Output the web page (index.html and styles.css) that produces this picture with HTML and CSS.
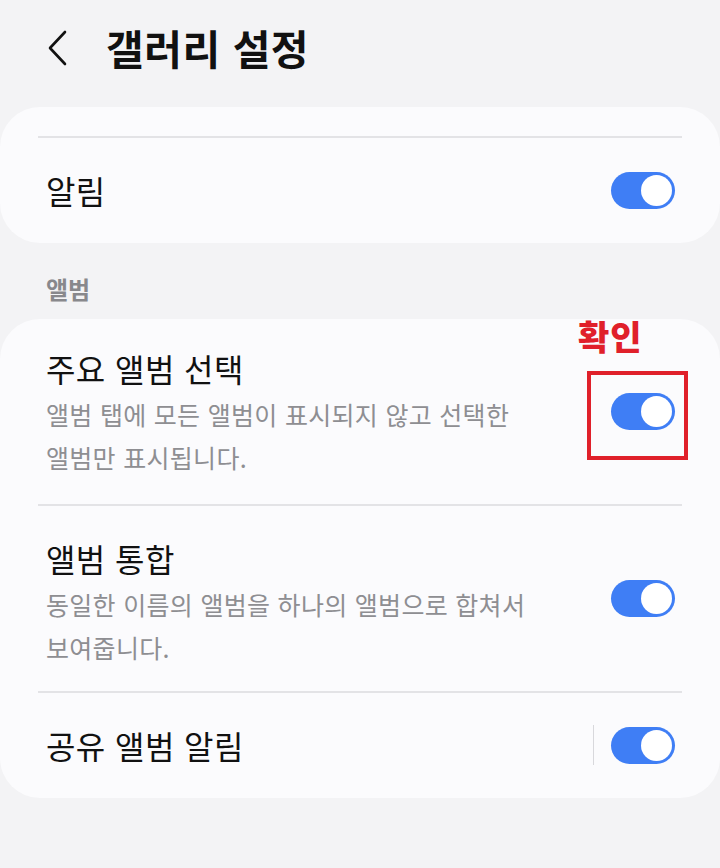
FILE: index.html
```html
<!DOCTYPE html>
<html lang="ko">
<head>
    <meta charset="UTF-8">
    <meta name="viewport" content="width=device-width, initial-scale=1.0">
    <title>갤러리 설정</title>
    <link rel="stylesheet" href="styles.css">
</head>
<body>
    <div class="header">
        <svg class="back" width="24" height="40" viewBox="0 0 24 40">
            <path d="M19 4 L4 20 L19 36" fill="none" stroke="#111" stroke-width="2.6" stroke-linecap="round" stroke-linejoin="round"/>
        </svg>
        <h1>갤러리 설정</h1>
    </div>

    <div class="card card-top">
        <div class="divider"></div>
        <div class="row row-single">
            <div class="row-text">
                <div class="row-title">알림</div>
            </div>
            <div class="toggle on"></div>
        </div>
    </div>

    <div class="section-label">앨범</div>

    <div class="card card-album">
        <div class="row row-first">
            <div class="row-text">
                <div class="row-title">주요 앨범 선택</div>
                <div class="row-sub">앨범 탭에 모든 앨범이 표시되지 않고 선택한 앨범만 표시됩니다.</div>
            </div>
            <div class="toggle on"></div>
        </div>
        <div class="divider"></div>
        <div class="row">
            <div class="row-text">
                <div class="row-title">앨범 통합</div>
                <div class="row-sub">동일한 이름의 앨범을 하나의 앨범으로 합쳐서 보여줍니다.</div>
            </div>
            <div class="toggle on"></div>
        </div>
        <div class="divider"></div>
        <div class="row row-single row-last">
            <div class="row-text">
                <div class="row-title">공유 앨범 알림</div>
            </div>
            <div class="vsep"></div>
            <div class="toggle on"></div>
        </div>

        <!-- annotation -->
        <div class="note-label">확인</div>
        <div class="note-box"></div>
    </div>
</body>
</html>
```

FILE: styles.css
```css
body {
    margin: 0;
    background-color: #f3f3f5;
    font-family: "Noto Sans CJK KR", "Noto Sans", sans-serif;
    color: #111;
}

.header {
    display: flex;
    align-items: center;
    height: 100px;
    padding-left: 46px;
    gap: 36px;
}

.back {
    display: block;
    margin-top: -4px;
}

.header h1 {
    margin: 0;
    font-size: 41px;
    font-weight: 700;
    letter-spacing: 0.5px;
    color: #111;
    margin-top: -6px;
}

.card {
    background-color: #fbfbfd;
    border-radius: 40px;
    padding: 0 38px;
    position: relative;
}

.card-top {
    margin-top: 7px;
    padding-top: 29px;
}

.divider {
    height: 2px;
    background-color: #e3e3e6;
}

.row {
    display: flex;
    align-items: center;
    padding: 32px 7px 22px 8px;
}

.row .toggle {
    margin-bottom: 10px;
}

.row-single {
    padding-top: 32px;
    padding-bottom: 33px;
}

.row-single .toggle {
    margin-bottom: 0;
}

.row-first {
    padding-top: 29px;
    padding-bottom: 25px;
}

.row-first .toggle {
    margin-bottom: 4px;
}

.row-last {
    padding-top: 32px;
    padding-bottom: 33px;
}

.row-text {
    flex: 1;
    padding-right: 60px;
    word-break: keep-all;
}

.row-title {
    font-size: 32px;
    line-height: 40px;
    letter-spacing: 0.4px;
    color: #111;
}

.row-sub {
    font-size: 25px;
    line-height: 43px;
    color: #8e8e92;
    margin-top: 5px;
    letter-spacing: 0.3px;
}

.toggle {
    width: 64px;
    height: 37px;
    border-radius: 19px;
    background-color: #3f7ef5;
    position: relative;
    flex-shrink: 0;
}

.toggle::after {
    content: "";
    position: absolute;
    top: 3px;
    right: 3px;
    width: 31px;
    height: 31px;
    border-radius: 50%;
    background-color: #fff;
}

.vsep {
    width: 1px;
    height: 40px;
    background-color: #d8d8dc;
    margin-right: 17px;
}

.section-label {
    font-size: 24px;
    font-weight: 700;
    color: #88888c;
    padding: 26px 0 10px 46px;
    line-height: 40px;
}

.note-label {
    position: absolute;
    top: -8px;
    left: 578px;
    font-size: 34px;
    font-weight: 900;
    letter-spacing: 1px;
    color: #e0202a;
}

.note-box {
    position: absolute;
    top: 52px;
    left: 587px;
    width: 93px;
    height: 81px;
    border: 4px solid #e0202a;
}
```
